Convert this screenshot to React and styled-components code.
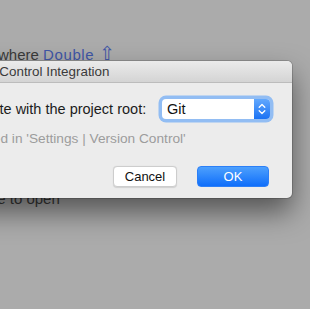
import React from "react";
import styled, { createGlobalStyle } from "styled-components";

const Global = createGlobalStyle`
  html, body { margin: 0; padding: 0; }
  body {
    width: 310px;
    height: 309px;
    overflow: hidden;
    background: #ababab;
    font-family: "Liberation Sans", Arial, sans-serif;
  }
`;

const Screen = styled.div`
  position: relative;
  width: 310px;
  height: 309px;
  overflow: hidden;
  background: #ababab;
`;

const Hints = styled.div`
  display: flex;
  flex-direction: column;
  padding-top: 37px;
  margin-left: -92px;
`;

const Hint = styled.div`
  height: 36px;
  line-height: 36px;
  font-size: 15px;
  color: #3a3a3a;
  white-space: nowrap;
`;

const Shortcut = styled.span`
  color: #3f56a6;
  letter-spacing: 0.6px;
`;

const Glyph = styled.span`
  font-family: "DejaVu Sans", sans-serif;
  font-size: 19px;
  line-height: 0;
`;

const Dialog = styled.div`
  position: absolute;
  top: 61px;
  left: -278px;
  width: 570px;
  background: #ececec;
  border-radius: 5px;
  box-shadow: 0 0 0 1px rgba(0, 0, 0, 0.16), 0 14px 28px rgba(0, 0, 0, 0.5);
  overflow: hidden;
`;

const TitleBar = styled.div`
  height: 21px;
  line-height: 22px;
  padding-left: 1px;
  text-align: center;
  font-size: 13.4px;
  color: #3a3a3a;
  background: linear-gradient(#ebebeb, #d4d4d4);
  border-bottom: 1px solid #bcbcbc;
  white-space: nowrap;
`;

const Body = styled.div`
  display: flex;
  flex-direction: column;
  padding: 16px 22px 11px 22px;
`;

const Row = styled.div`
  display: flex;
  align-items: center;
  height: 20px;
`;

const Label = styled.span`
  font-size: 14.5px;
  color: #1c1c1c;
  white-space: nowrap;
`;

const Select = styled.div`
  margin-left: auto;
  display: flex;
  width: 108px;
  height: 20px;
  border-radius: 4px;
  box-shadow: 0 0 0 3.5px #92bdf3;
  background: #fff;
  overflow: hidden;
`;

const SelectValue = styled.span`
  flex: 1;
  padding-left: 5px;
  font-size: 14.5px;
  line-height: 20px;
  color: #111;
`;

const SelectArrow = styled.span`
  width: 16px;
  display: flex;
  align-items: center;
  justify-content: center;
  background: linear-gradient(#62a8fd, #1b72f4);
`;

const Note = styled.div`
  margin-top: 12px;
  font-size: 13.7px;
  line-height: 16px;
  color: #9c9c9c;
  white-space: nowrap;
`;

const Buttons = styled.div`
  display: flex;
  justify-content: flex-end;
  gap: 20px;
  margin-top: 19px;
  padding-right: 1px;
`;

const Button = styled.button`
  height: 21px;
  width: ${(p) => (p.$primary ? "72px" : "64px")};
  padding: 0;
  border-radius: 4px;
  font-family: "Liberation Sans", Arial, sans-serif;
  font-size: 13px;
  line-height: 19px;
  color: ${(p) => (p.$primary ? "#fff" : "#111")};
  border: 1px solid ${(p) => (p.$primary ? "#2c7ff7" : "#cdcdcd")};
  background: ${(p) => (p.$primary ? "linear-gradient(#4da0fd, #0f6efa)" : "#fff")};
  box-shadow: ${(p) => (p.$primary ? "none" : "0 0.5px 1px rgba(0,0,0,0.12)")};
`;

function Chevrons() {
  return (
    <svg width="8" height="12" viewBox="0 0 8 12" fill="none" stroke="#fff" strokeWidth="1.3" strokeLinecap="round" strokeLinejoin="round">
      <path d="M1.2 4.3 L4 1.5 L6.8 4.3" />
      <path d="M1.2 7.7 L4 10.5 L6.8 7.7" />
    </svg>
  );
}

export default function App() {
  return (
    <Screen>
      <Global />
      <Hints>
        <Hint>
          Search Everywhere <Shortcut>Double <Glyph>⇧</Glyph></Shortcut>
        </Hint>
        <Hint>
          Go to File <Shortcut><Glyph>⇧⌘</Glyph>O</Shortcut>
        </Hint>
        <Hint>
          Recent Files <Shortcut><Glyph>⌘</Glyph>E</Shortcut>
        </Hint>
        <Hint>
          Navigation Bar <Shortcut><Glyph>⌘↑</Glyph></Shortcut>
        </Hint>
        <Hint>Drop files here to open</Hint>
      </Hints>
      <Dialog>
        <TitleBar>Enable Version Control Integration</TitleBar>
        <Body>
          <Row>
            <Label>Select version control engine to associate with the project root:</Label>
            <Select>
              <SelectValue>Git</SelectValue>
              <SelectArrow>
                <Chevrons />
              </SelectArrow>
            </Select>
          </Row>
          <Note>Version control integration can be managed in 'Settings | Version Control'</Note>
          <Buttons>
            <Button>Cancel</Button>
            <Button $primary>OK</Button>
          </Buttons>
        </Body>
      </Dialog>
    </Screen>
  );
}
